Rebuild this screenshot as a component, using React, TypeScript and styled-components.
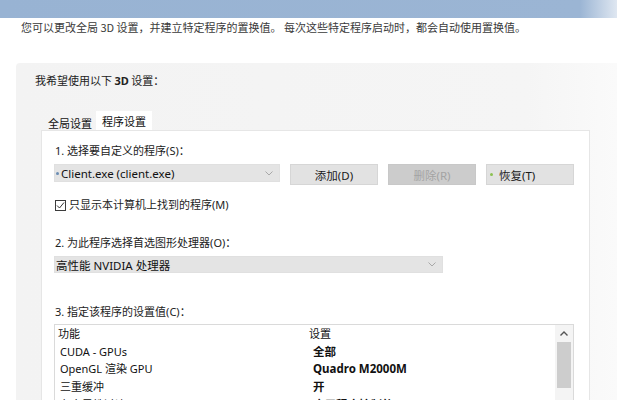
import styled, { createGlobalStyle } from "styled-components";

const GlobalStyle = createGlobalStyle`
    html, body {
        margin: 0;
        padding: 0;
        background: #ffffff;
        overflow: hidden;
    }
    body {
        font-family: "Noto Sans", "Noto Sans CJK SC", sans-serif;
        font-size: 11px;
        color: #222222;
    }
`;

type Row = { feature: string; value: string };

const rows: Row[] = [
    { feature: "CUDA - GPUs", value: "全部" },
    { feature: "OpenGL 渲染 GPU", value: "Quadro M2000M" },
    { feature: "三重缓冲", value: "开" },
    { feature: "各向异性过滤", value: "应用程序控制的" },
];

const Chevron = () => (
    <svg width="8" height="5" viewBox="0 0 8 5">
        <polyline points="0.5,0.5 4,4 7.5,0.5" fill="none" stroke="#a8a8a8" strokeWidth="1" />
    </svg>
);

const App = () => {
    return (
        <Page>
            <GlobalStyle />
            <TopBar />
            <Intro>
                您可以更改全局 3D 设置，并建立特定程序的置换值。 每次这些特定程序启动时，都会自动使用置换值。
            </Intro>
            <Panel>
                <PanelTitle>
                    我希望使用以下 <b>3D</b> 设置：
                </PanelTitle>
                <TabArea>
                    <TabStrip>
                        <Tab>全局设置</Tab>
                        <Tab $active>程序设置</Tab>
                    </TabStrip>
                    <TabBody>
                        <Label>1. 选择要自定义的程序(S)：</Label>
                        <ControlRow>
                            <Combo $width={ 226 }>
                                <ComboText>
                                    <Dot $color="#6b8db3" />
                                    Client.exe (client.exe)
                                </ComboText>
                                <Chevron />
                            </Combo>
                            <ActionButton>添加(D)</ActionButton>
                            <ActionButton $disabled>删除(R)</ActionButton>
                            <ActionButton $align="left">
                                <Dot $color="#8cc152" />
                                恢复(T)
                            </ActionButton>
                        </ControlRow>
                        <CheckRow>
                            <CheckBox>
                                <svg width="9" height="9" viewBox="0 0 9 9">
                                    <polyline points="1,4.5 3.5,7 8,1.5" fill="none" stroke="#333" strokeWidth="1" />
                                </svg>
                            </CheckBox>
                            只显示本计算机上找到的程序(M)
                        </CheckRow>

                        <Label $gap={ 22 }>2. 为此程序选择首选图形处理器(O)：</Label>
                        <Combo $width={ 389 } $height={ 17 } $top={ 5 }>
                            <ComboText>高性能 NVIDIA 处理器</ComboText>
                            <Chevron />
                        </Combo>

                        <Label $gap={ 31 }>3. 指定该程序的设置值(C)：</Label>
                        <ListBox>
                            <ListGrid>
                                <Cell $indent={ 3 }>功能</Cell>
                                <Cell $indent={ 3 }>设置</Cell>
                                { rows.map((row) => (
                                    <>
                                        <Cell key={ row.feature } $indent={ 5 }>{ row.feature }</Cell>
                                        <Cell key={ row.value } $indent={ 7 } $bold>{ row.value }</Cell>
                                    </>
                                )) }
                            </ListGrid>
                            <ScrollBar>
                                <ScrollArrow>
                                    <svg width="8" height="5" viewBox="0 0 8 5">
                                        <polyline points="0.5,4.5 4,1 7.5,4.5" fill="none" stroke="#555" strokeWidth="1.4" />
                                    </svg>
                                </ScrollArrow>
                                <ScrollThumb />
                            </ScrollBar>
                        </ListBox>
                    </TabBody>
                </TabArea>
            </Panel>
        </Page>
    );
};

export default App;

const Page = styled.div`
    width: 617px;
    height: 400px;
    overflow: hidden;
`;

const TopBar = styled.div`
    height: 18px;
    background: linear-gradient(to right, #98b3d3 0%, #9bb5d4 94%, #dfe7f1 100%);
`;

const Intro = styled.div`
    padding-left: 21px;
    line-height: 18px;
    font-size: 11px;
    color: #3a3a3a;
    font-family: "Noto Sans CJK SC", sans-serif;
`;

const Panel = styled.div`
    margin: 27px 0 0 16px;
    padding: 9px 0 0 19px;
    height: 400px;
    background: linear-gradient(to right, #f3f3f3 0%, #f5f5f5 85%, #fafafa 100%);
    border-top-left-radius: 4px;
`;

const PanelTitle = styled.div`
    line-height: 16px;
    font-size: 11px;
    color: #222;
    font-family: "Noto Sans CJK SC", sans-serif;

    b {
        font-family: "Noto Sans", sans-serif;
        font-weight: 700;
    }
`;

const TabArea = styled.div`
    margin: 22px 0 0 6px;
    width: 549px;
`;

const TabStrip = styled.div`
    display: flex;
    align-items: flex-end;
    padding-left: 3px;
`;

const Tab = styled.div<{ $active?: boolean }>`
    line-height: 14px;
    padding: ${ p => p.$active ? "3px 6px 2px 6px" : "2px 4px 0 4px" };
    background: ${ p => p.$active ? "#ffffff" : "transparent" };
    font-family: "Noto Sans CJK SC", sans-serif;
    color: #111;
`;

const TabBody = styled.div`
    background: #ffffff;
    border: 1px solid #e6e6e6;
    padding: 12px 0 0 12px;
    height: 300px;
`;

const Label = styled.div<{ $gap?: number }>`
    margin-top: ${ p => p.$gap ?? 0 }px;
    line-height: 16px;
    padding-left: 1px;
    color: #222;
`;

const ControlRow = styled.div`
    display: flex;
    align-items: flex-start;
    gap: 10px;
    margin-top: 5px;
`;

const Combo = styled.div<{ $width: number; $height?: number; $top?: number }>`
    box-sizing: border-box;
    width: ${ p => p.$width }px;
    height: ${ p => p.$height ?? 18 }px;
    margin-top: ${ p => p.$top ?? 0 }px;
    background: #e4e4e4;
    border: 1px solid #e0e0e0;
    display: flex;
    align-items: center;
    justify-content: space-between;
    padding: 0 6px 0 1px;
    margin-right: 0;
`;

const ComboText = styled.span`
    display: flex;
    align-items: center;
    gap: 2px;
    font-size: 11.5px;
    color: #111;
`;

const Dot = styled.span<{ $color: string }>`
    width: 3px;
    height: 3px;
    border-radius: 50%;
    background: ${ p => p.$color };
`;

const ActionButton = styled.div<{ $disabled?: boolean; $align?: "left" }>`
    box-sizing: border-box;
    width: 88px;
    height: 21px;
    display: flex;
    align-items: center;
    justify-content: ${ p => p.$align === "left" ? "flex-start" : "center" };
    gap: 6px;
    padding-left: ${ p => p.$align === "left" ? "3px" : "0" };
    background: ${ p => p.$disabled ? "#cccccc" : "#e2e2e2" };
    border: 1px solid ${ p => p.$disabled ? "#c8c8c8" : "#d6d6d6" };
    color: ${ p => p.$disabled ? "#a3a3a3" : "#1a1a1a" };
    font-size: 11.5px;
`;

const CheckRow = styled.div`
    display: flex;
    align-items: center;
    gap: 3px;
    margin-top: 12px;
    line-height: 16px;
    padding-left: 1px;
`;

const CheckBox = styled.span`
    box-sizing: border-box;
    width: 11px;
    height: 11px;
    border: 1px solid #3c3c3c;
    display: flex;
    align-items: center;
    justify-content: center;
    background: #fff;
`;

const ListBox = styled.div`
    box-sizing: border-box;
    width: 520px;
    margin-top: 4px;
    height: 120px;
    border: 1px solid #dadada;
    display: flex;
`;

const ListGrid = styled.div`
    flex: 1;
    display: grid;
    grid-template-columns: 251px 1fr;
    grid-auto-rows: 17.7px;
    align-content: start;
`;

const Cell = styled.div<{ $indent: number; $bold?: boolean }>`
    padding-left: ${ p => p.$indent }px;
    line-height: 17.7px;
    white-space: nowrap;
    font-weight: ${ p => p.$bold ? 700 : 400 };
    font-size: ${ p => p.$bold ? "11.5px" : "11px" };
    color: #111;
`;

const ScrollBar = styled.div`
    width: 18px;
    background: #f4f4f4;
    display: flex;
    flex-direction: column;
    align-items: center;
`;

const ScrollArrow = styled.div`
    height: 17px;
    width: 100%;
    display: flex;
    align-items: center;
    justify-content: center;
`;

const ScrollThumb = styled.div`
    width: 14px;
    height: 46px;
    background: #cdcdcd;
`;
